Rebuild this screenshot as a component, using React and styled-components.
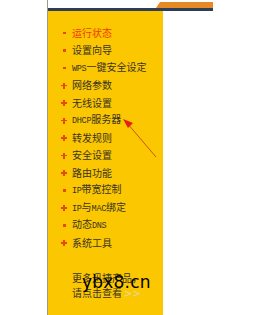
import React from "react";
import styled, { createGlobalStyle } from "styled-components";

const Global = createGlobalStyle`
  html, body {
    margin: 0;
    padding: 0;
    background: #fff;
  }
  body {
    font-family: "Noto Sans CJK SC", "DejaVu Sans", sans-serif;
  }
`;

const Page = styled.div`
  position: relative;
  width: 260px;
  height: 315px;
  overflow: hidden;
  padding-left: 47px;
  box-sizing: border-box;
`;

const Frame = styled.div`
  width: 165px;
  height: 100%;
  display: flex;
  flex-direction: column;
  border-left: 1px solid #9a9a8a;
`;

const Header = styled.div`
  height: 8px;
  display: flex;
  justify-content: flex-end;
  align-items: flex-end;
`;

const Tab = styled.div`
  width: 57px;
  height: 6px;
  background: #e58a24;
  clip-path: polygon(4px 0, 100% 0, 100% 100%, 0 100%);
`;

const Rule = styled.div`
  height: 3px;
  background: #2e3d58;
`;

const Panel = styled.div`
  flex: 1;
  width: 115px;
  background: #fac700;
  padding-top: 13px;
  box-sizing: border-box;
`;

const Menu = styled.ul`
  list-style: none;
  margin: 0;
  padding: 0;
`;

const Item = styled.li`
  height: 17.5px;
  display: flex;
  align-items: center;
  padding-left: 13px;
  font-size: 10px;
  color: ${(p) => (p.$active ? "#f23a00" : "#3a3322")};
  white-space: nowrap;
`;

const Label = styled.span`
  line-height: 12px;
`;

const Mark = styled.span`
  position: relative;
  width: 7px;
  height: 7px;
  margin-right: 4px;
  flex: none;

  &::before,
  &::after {
    content: "";
    position: absolute;
    background: #e8480a;
  }

  ${(p) =>
    p.$plus
      ? `
    &::before { left: 0; top: 3px; width: 6px; height: 1.5px; }
    &::after { left: 2.25px; top: 0.75px; width: 1.5px; height: 6px; }
  `
      : `
    &::before { left: 2px; top: 2.5px; width: 2.5px; height: 2.5px; }
    &::after { display: none; }
  `}
`;

const Latin = styled.span`
  font-family: "Liberation Mono", monospace;
  font-size: 8.5px;
  letter-spacing: -0.3px;
`;

const More = styled.div`
  margin-top: 18px;
  padding-left: 24px;
  font-size: 10px;
  line-height: 15px;
  color: #3a3322;
  white-space: nowrap;
`;

const Chevrons = styled.span`
  color: #e6d9a8;
  font-family: "DejaVu Sans", sans-serif;
  margin-left: 2px;
`;

const Watermark = styled.div`
  position: absolute;
  left: 82px;
  top: 272px;
  font-family: "DejaVu Sans", sans-serif;
  font-size: 17px;
  line-height: 20px;
  color: #000;
  letter-spacing: 0.2px;
`;

const Arrow = styled.svg`
  position: absolute;
  left: 118px;
  top: 114px;
`;

const items = [
  { label: "运行状态", active: true },
  { label: "设置向导" },
  { label: [<Latin key="l">WPS</Latin>, "一键安全设定"] },
  { label: "网络参数", plus: true },
  { label: "无线设置", plus: true },
  { label: [<Latin key="l">DHCP</Latin>, "服务器"], plus: true },
  { label: "转发规则", plus: true },
  { label: "安全设置", plus: true },
  { label: "路由功能", plus: true },
  { label: [<Latin key="l">IP</Latin>, "带宽控制"] },
  { label: [<Latin key="l">IP</Latin>, "与", <Latin key="m">MAC</Latin>, "绑定"], plus: true },
  { label: ["动态", <Latin key="l">DNS</Latin>] },
  { label: "系统工具", plus: true },
];

export default function App() {
  return (
    <>
      <Global />
      <Page>
        <Frame>
          <Header>
            <Tab />
          </Header>
          <Rule />
          <Panel>
            <Menu>
              {items.map((it, i) => (
                <Item key={i} $active={it.active}>
                  <Mark $plus={it.plus} />
                  <Label>{it.label}</Label>
                </Item>
              ))}
            </Menu>
            <More>
              <div>更多迅捷产品，</div>
              <div>
                请点击查看<Chevrons>&gt;&gt;</Chevrons>
              </div>
            </More>
          </Panel>
        </Frame>
        <Watermark>ybx8.cn</Watermark>
        <Arrow width="44" height="48" viewBox="0 0 44 48">
          <line x1="9" y1="9" x2="38" y2="43" stroke="#c8541a" strokeWidth="1" />
          <polygon points="5,5 15,9 10,14" fill="#e3201a" />
        </Arrow>
      </Page>
    </>
  );
}
